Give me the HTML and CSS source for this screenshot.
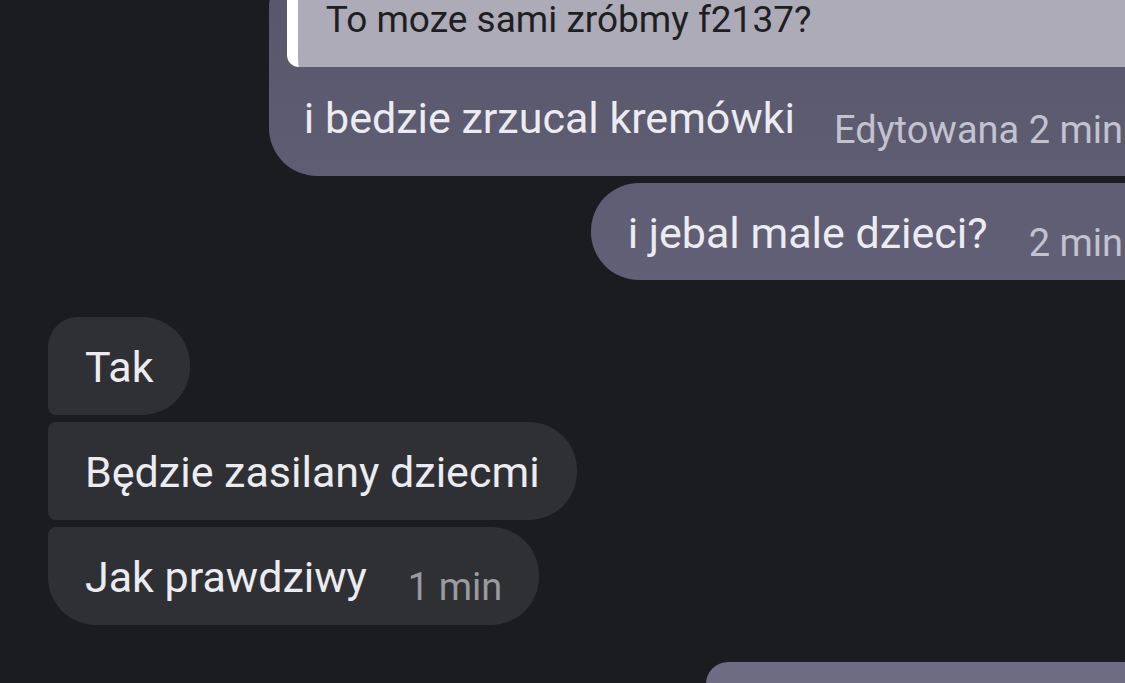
FILE: index.html
```html
<!DOCTYPE html>
<html lang="pl">
<head>
    <meta charset="UTF-8">
    <meta name="viewport" content="width=device-width, initial-scale=1.0">
    <title>Czat</title>
    <link rel="stylesheet" href="styles.css">
</head>
<body>
    <div class="chat">
        <div class="group sent">
            <div class="bubble first reply">
                <div class="quote">To moze sami zróbmy f2137?</div>
                <div class="line">i bedzie zrzucal kremówki<span class="time">Edytowana 2 min</span></div>
            </div>
            <div class="bubble last">
                <div class="line">i jebal male dzieci?<span class="time">2 min</span></div>
            </div>
        </div>

        <div class="group received">
            <div class="bubble first">
                <div class="line">Tak</div>
            </div>
            <div class="bubble">
                <div class="line">Będzie zasilany dziecmi</div>
            </div>
            <div class="bubble last">
                <div class="line">Jak prawdziwy<span class="time">1 min</span></div>
            </div>
        </div>

        <div class="group sent">
            <div class="bubble first next"></div>
        </div>
    </div>
</body>
</html>
```

FILE: styles.css
```css
* {
    margin: 0;
    padding: 0;
    box-sizing: border-box;
}

body {
    background-color: #1b1c20;
    font-family: Roboto, "Noto Sans", sans-serif;
    color: #ececf0;
    overflow: hidden;
    height: 100vh;
}

.chat {
    width: 1160px;
    margin-top: -40px;
    padding-left: 48px;
    display: flex;
    flex-direction: column;
    gap: 37px;
}

.group {
    display: flex;
    flex-direction: column;
    gap: 7px;
}

.sent {
    align-items: flex-end;
}

.received {
    align-items: flex-start;
}

.bubble {
    padding: 26px 37px 24px;
    font-size: 43px;
    line-height: 48px;
}

.line {
    white-space: nowrap;
}

.time {
    display: inline-block;
    margin-left: 41px;
    font-size: 38px;
    line-height: 20px;
    vertical-align: -8px;
}

/* my messages */
.sent .bubble {
    background: linear-gradient(#58576c, #6e6d84) fixed;
    border-radius: 48px 0 0 48px;
}

.sent .last {
    padding-bottom: 23px;
}

.sent .time {
    color: #c3c2cf;
}

.reply {
    padding: 0 37px 34px 35px;
}

.reply .time {
    margin-left: 39px;
    vertical-align: -10px;
}

.quote {
    margin: 0 -37px 27px -17px;
    padding: 40px 20px 27px 28px;
    background-color: #acabb7;
    border-left: 11px solid #ffffff;
    border-bottom-left-radius: 12px;
    color: #1e1e23;
    font-size: 37px;
    line-height: 40px;
}

.next {
    width: 454px;
    height: 22px;
    padding: 0;
    border-radius: 42px 0 0 0 !important;
}

/* their messages */
.received .bubble {
    background-color: #2f3034;
    border-radius: 8px 48px 48px 8px;
}

.received .first {
    border-top-left-radius: 30px;
}

.received .last {
    border-bottom-left-radius: 48px;
}

.received .time {
    color: #9a9b9f;
}
```
